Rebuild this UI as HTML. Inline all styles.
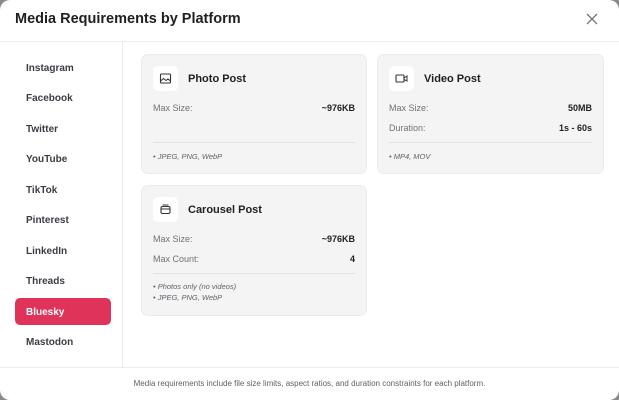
<!DOCTYPE html>
<html><head><style>
*{margin:0;padding:0;box-sizing:border-box}
html,body{width:619px;height:400px;background:#8a8a8a;overflow:hidden;font-family:"Liberation Sans",sans-serif}
.m{position:absolute;left:0;top:0;width:619px;height:400px;background:#fff;border-radius:10px;overflow:hidden}
.hd{position:absolute;left:0;top:0;width:619px;height:42px;border-bottom:1px solid #ececec}
.hd h1{position:absolute;left:15px;top:11px;font-size:14.5px;font-weight:bold;color:#1f1f23}
.x{position:absolute;left:585px;top:12px}
.sb{position:absolute;left:0;top:42px;width:123px;height:325px;border-right:1px solid #ececec}
.it{position:absolute;left:26px;font-size:10px;font-weight:bold;color:#3c3c44}
.act{position:absolute;left:15px;top:256px;width:96px;height:27px;background:#e0335a;border-radius:5px}
.card{position:absolute;background:#f4f4f5;border:1px solid #ebebed;border-radius:7px}
.ib{position:absolute;left:11px;top:11px;width:25px;height:25px;background:#fff;border-radius:5px}
.ib svg{position:absolute;left:6px;top:6px}
.t{position:absolute;left:46px;top:18px;font-size:11px;font-weight:bold;color:#1f1f23}
.l{position:absolute;left:11px;font-size:9px;color:#707078}
.v{position:absolute;right:11px;font-size:9px;font-weight:bold;color:#1f1f23}
.dv{position:absolute;left:11px;right:11px;height:1px;background:#e3e3e6}
.n{position:absolute;left:11px;font-size:7.5px;font-style:italic;color:#606068;line-height:10.5px}
.ft{position:absolute;left:0;top:367px;width:619px;height:33px;border-top:1px solid #ececec}
.ft p{position:absolute;left:0;width:619px;top:11px;text-align:center;font-size:8px;color:#606068}
</style></head><body><div class="m">
<div class="hd"><h1>Media Requirements by Platform</h1>
<svg class="x" width="14" height="14" viewBox="0 0 14 14"><path d="M2 2L12 12M12 2L2 12" stroke="#777" stroke-width="1.3"/></svg></div>
<div class="sb">
<div class="it" style="top:21px">Instagram</div>
<div class="it" style="top:51px">Facebook</div>
<div class="it" style="top:82px">Twitter</div>
<div class="it" style="top:112px">YouTube</div>
<div class="it" style="top:143px">TikTok</div>
<div class="it" style="top:173px">Pinterest</div>
<div class="it" style="top:204px">LinkedIn</div>
<div class="it" style="top:234px">Threads</div>
<div class="act"></div>
<div class="it" style="top:265px;color:#fff">Bluesky</div>
<div class="it" style="top:295px">Mastodon</div>
</div>
<div class="card" style="left:141px;top:54px;width:226px;height:120px">
<div class="ib"><svg width="13" height="13" viewBox="0 0 13 13"><rect x="1.5" y="2" width="10" height="9" rx="1" fill="none" stroke="#333" stroke-width="1.1"/><path d="M1.5 9L4.5 6.5L7 8.5L9 7L11.5 9" fill="none" stroke="#333" stroke-width="1"/></svg></div>
<div class="t">Photo Post</div>
<div class="l" style="top:48px">Max Size:</div><div class="v" style="top:48px">~976KB</div>
<div class="dv" style="top:87px"></div>
<div class="n" style="top:97px">• JPEG, PNG, WebP</div>
</div>
<div class="card" style="left:377px;top:54px;width:227px;height:120px">
<div class="ib"><svg width="13" height="13" viewBox="0 0 13 13"><rect x="1" y="3" width="8" height="7" rx="1" fill="none" stroke="#333" stroke-width="1.1"/><path d="M9 6L12 4V9L9 7.5" fill="none" stroke="#333" stroke-width="1"/></svg></div>
<div class="t">Video Post</div>
<div class="l" style="top:48px">Max Size:</div><div class="v" style="top:48px">50MB</div>
<div class="l" style="top:68px">Duration:</div><div class="v" style="top:68px">1s - 60s</div>
<div class="dv" style="top:87px"></div>
<div class="n" style="top:97px">• MP4, MOV</div>
</div>
<div class="card" style="left:141px;top:185px;width:226px;height:131px">
<div class="ib"><svg width="13" height="13" viewBox="0 0 13 13"><rect x="2" y="3.5" width="9" height="7" rx="1.5" fill="none" stroke="#333" stroke-width="1.1"/><path d="M2 6H11" stroke="#333" stroke-width="1"/><path d="M3.5 2H9.5" stroke="#333" stroke-width="1"/></svg></div>
<div class="t">Carousel Post</div>
<div class="l" style="top:48px">Max Size:</div><div class="v" style="top:48px">~976KB</div>
<div class="l" style="top:68px">Max Count:</div><div class="v" style="top:68px">4</div>
<div class="dv" style="top:87px"></div>
<div class="n" style="top:96px">• Photos only (no videos)<br>• JPEG, PNG, WebP</div>
</div>
<div class="ft"><p>Media requirements include file size limits, aspect ratios, and duration constraints for each platform.</p></div>
</div></body></html>
